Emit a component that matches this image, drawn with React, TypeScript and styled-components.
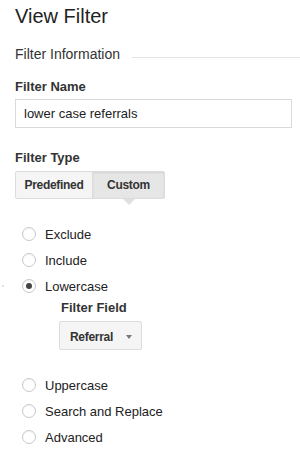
import React, { useState } from "react";
import styled, { createGlobalStyle } from "styled-components";

const GlobalStyle = createGlobalStyle`
  body {
    margin: 0;
    background: #fff;
    font-family: Arial, "Liberation Sans", sans-serif;
    color: #222;
  }
`;

const Page = styled.div`
  display: flex;
  flex-direction: column;
  padding: 4px 0 0 15px;
  width: 300px;
  box-sizing: border-box;
`;

const Title = styled.h1`
  margin: 0;
  font-size: 20px;
  line-height: 24px;
  font-weight: normal;
  color: #222;
`;

const SectionHead = styled.div`
  display: flex;
  gap: 12px;
  margin-top: 18px;
`;

const SectionTitle = styled.span`
  font-size: 14px;
  line-height: 16px;
  color: #333;
  white-space: nowrap;
`;

const Rule = styled.div`
  flex: 1;
  height: 1px;
  margin-top: 11px;
  background: #e5e5e5;
`;

const Label = styled.label<{ $top: number; $indent?: number }>`
  display: block;
  margin-top: ${(p) => p.$top}px;
  margin-left: ${(p) => p.$indent ?? 0}px;
  font-size: 13px;
  line-height: 15px;
  font-weight: bold;
  color: #333;
`;

const TextInput = styled.input`
  margin: 5px 8px 0 0;
  height: 29px;
  box-sizing: border-box;
  border: 1px solid #d9d9d9;
  padding: 0 8px;
  font-family: inherit;
  font-size: 13px;
  color: #222;
  outline: none;
`;

const Segments = styled.div`
  display: flex;
  margin-top: 6px;
`;

const Segment = styled.button<{ $active?: boolean; $width: number }>`
  position: relative;
  width: ${(p) => p.$width}px;
  height: 28px;
  padding: 0;
  border: 1px solid #dcdcdc;
  margin-left: ${(p) => (p.$active ? "-1px" : "0")};
  border-radius: ${(p) => (p.$active ? "0 2px 2px 0" : "2px 0 0 2px")};
  background: ${(p) => (p.$active ? "#e6e6e6" : "#f5f5f5")};
  box-shadow: ${(p) => (p.$active ? "inset 0 1px 2px rgba(0,0,0,0.08)" : "none")};
  font-family: inherit;
  font-size: 12px;
  font-weight: bold;
  letter-spacing: -0.3px;
  color: #333;
  cursor: pointer;

  &::after {
    content: "";
    display: ${(p) => (p.$active ? "block" : "none")};
    position: absolute;
    left: 50%;
    bottom: -7px;
    margin-left: -6px;
    border-left: 6px solid transparent;
    border-right: 6px solid transparent;
    border-top: 6px solid #e0e0e0;
  }
`;

const RadioList = styled.div<{ $top: number }>`
  display: flex;
  flex-direction: column;
  margin-top: ${(p) => p.$top}px;
`;

const RadioRow = styled.label<{ $marked?: boolean }>`
  position: relative;
  display: flex;
  align-items: center;
  gap: 9px;
  height: 26px;
  padding-left: 7px;
  font-size: 13px;
  color: #222;
  cursor: pointer;

  &::before {
    content: "";
    display: ${(p) => (p.$marked ? "block" : "none")};
    position: absolute;
    left: -13px;
    top: 12px;
    width: 2px;
    height: 2px;
    border-radius: 50%;
    background: #d8d8d8;
  }
`;

const RadioCircle = styled.span<{ $checked?: boolean }>`
  display: flex;
  align-items: center;
  justify-content: center;
  width: 14px;
  height: 14px;
  box-sizing: border-box;
  border: 1px solid #c8c8c8;
  border-radius: 50%;
  background: #fff;
  box-shadow: inset 0 1px 1px rgba(0, 0, 0, 0.06);

  &::after {
    content: "";
    display: ${(p) => (p.$checked ? "block" : "none")};
    width: 6px;
    height: 6px;
    border-radius: 50%;
    background: #444;
  }
`;

const SubBlock = styled.div`
  display: flex;
  flex-direction: column;
  align-items: flex-start;
  padding-left: 45px;
  margin-bottom: 22px;
`;

const Dropdown = styled.button`
  display: flex;
  align-items: center;
  justify-content: space-between;
  width: 83px;
  height: 29px;
  margin-top: 6px;
  margin-left: -1px;
  padding: 3px 9px 0 10px;
  box-sizing: border-box;
  border: 1px solid #dcdcdc;
  border-radius: 2px;
  background: #f5f5f5;
  font-family: inherit;
  font-size: 12px;
  font-weight: bold;
  letter-spacing: -0.3px;
  color: #333;
  cursor: pointer;
`;

const Arrow = styled.span`
  width: 0;
  height: 0;
  border-left: 3.5px solid transparent;
  border-right: 3.5px solid transparent;
  border-top: 4px solid #777;
`;

const types = ["Exclude", "Include", "Lowercase", "Uppercase", "Search and Replace", "Advanced"];

export default function App() {
  const [name, setName] = useState("lower case referrals");
  const [mode, setMode] = useState<"predefined" | "custom">("custom");
  const [selected, setSelected] = useState("Lowercase");

  const row = (t: string) => (
    <RadioRow key={t} $marked={t === "Lowercase"} onClick={() => setSelected(t)}>
      <RadioCircle $checked={selected === t} />
      {t}
    </RadioRow>
  );

  return (
    <>
      <GlobalStyle />
      <Page>
        <Title>View Filter</Title>
        <SectionHead>
          <SectionTitle>Filter Information</SectionTitle>
          <Rule />
        </SectionHead>

        <Label $top={17}>Filter Name</Label>
        <TextInput value={name} onChange={(e) => setName(e.target.value)} />

        <Label $top={22}>Filter Type</Label>
        <Segments>
          <Segment $width={78} $active={mode === "predefined"} onClick={() => setMode("predefined")}>
            Predefined
          </Segment>
          <Segment $width={73} $active={mode === "custom"} onClick={() => setMode("custom")}>
            Custom
          </Segment>
        </Segments>

        <RadioList $top={22}>
          {types.slice(0, 3).map(row)}
          {selected === "Lowercase" && (
            <SubBlock>
              <Label $top={1} $indent={1}>Filter Field</Label>
              <Dropdown>
                Referral
                <Arrow />
              </Dropdown>
            </SubBlock>
          )}
          {types.slice(3).map(row)}
        </RadioList>
      </Page>
    </>
  );
}
